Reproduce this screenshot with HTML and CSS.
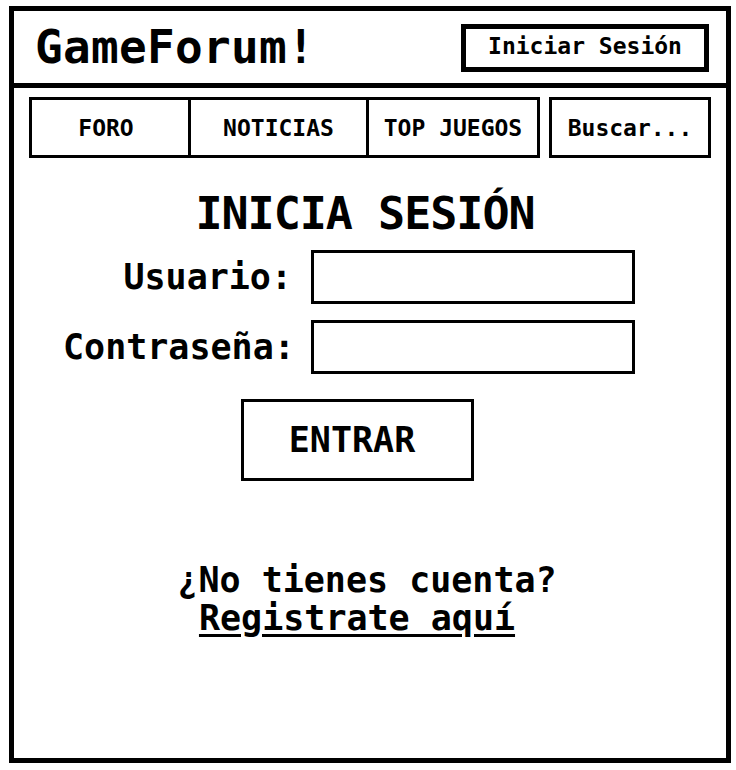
FILE: index.html
```html
<!DOCTYPE html>
<html lang="es">
<head>
  <meta charset="UTF-8" />
  <meta name="viewport" content="width=device-width, initial-scale=1.0"/>
  <title>GameForum! - Inicia sesión</title>
  <link rel="stylesheet" href="styles.css">
</head>
<body>
  <div class="frame">
    <div class="header">
      <span class="logo">GameForum!</span>
      <button class="btn-login">Iniciar Sesión</button>
    </div>

    <div class="nav">
      <div class="nav-group">
        <a class="nav-item foro" href="#">FORO</a>
        <a class="nav-item noticias" href="#">NOTICIAS</a>
        <a class="nav-item top" href="#">TOP JUEGOS</a>
      </div>
      <div class="nav-search">Buscar...</div>
    </div>

    <div class="login">
      <h1>INICIA SESIÓN</h1>
      <form class="login-form">
        <label for="usuario">Usuario:</label>
        <input id="usuario" type="text" />
        <label for="clave">Contraseña:</label>
        <input id="clave" type="password" />
      </form>
      <button class="btn-entrar">ENTRAR</button>

      <div class="register">
        <p>¿No tienes cuenta?</p>
        <a href="#">Registrate aquí</a>
      </div>
    </div>
  </div>
</body>
</html>
```

FILE: styles.css
```css
:root {
  --ink: #000000;
  --paper: #ffffff;
  --font-family: 'DejaVu Sans Mono', 'Liberation Mono', monospace;
}

body {
  margin: 0;
  padding: 0;
  font-family: var(--font-family);
  font-weight: bold;
  background-color: var(--paper);
  color: var(--ink);
}

.frame {
  box-sizing: border-box;
  width: 722px;
  height: 757px;
  margin: 6px 0 0 9px;
  border: 5px solid var(--ink);
}

.header {
  display: flex;
  align-items: center;
  justify-content: space-between;
  height: 72px;
  padding: 0 17px 0 21px;
  border-bottom: 5px solid var(--ink);
}

.logo {
  font-size: 46px;
  letter-spacing: 0.3px;
}

.btn-login {
  box-sizing: border-box;
  width: 248px;
  height: 48px;
  margin-top: 1px;
  padding: 0 0 4px;
  font-family: var(--font-family);
  font-weight: bold;
  font-size: 23px;
  color: var(--ink);
  background-color: var(--paper);
  border: 5px solid var(--ink);
  border-radius: 0;
}

.nav {
  display: flex;
  gap: 9px;
  margin: 9px 15px 0;
  height: 61px;
}

.nav-group {
  display: flex;
  border: 3px solid var(--ink);
}

.nav-item,
.nav-search {
  display: flex;
  align-items: center;
  justify-content: center;
  font-size: 23px;
  color: var(--ink);
  text-decoration: none;
}

.nav-item + .nav-item {
  border-left: 3px solid var(--ink);
}

.foro { width: 156px; padding-right: 8px; box-sizing: border-box; }
.noticias { width: 175px; }
.top { width: 168px; }

.nav-search {
  box-sizing: border-box;
  width: 162px;
  border: 3px solid var(--ink);
}

.login h1 {
  margin: 30px 0 0;
  padding-right: 10px;
  font-size: 45px;
  line-height: 52px;
  letter-spacing: -1px;
  text-align: center;
}

.login-form {
  display: grid;
  grid-template-columns: 229px 324px;
  column-gap: 19px;
  row-gap: 16px;
  align-items: center;
  margin: 10px 0 0;
  padding-left: 49px;
}

.login-form label {
  font-size: 35px;
  text-align: right;
}

.login-form input {
  box-sizing: border-box;
  height: 54px;
  border: 3px solid var(--ink);
  border-radius: 0;
  outline: none;
}

.btn-entrar {
  display: block;
  box-sizing: border-box;
  width: 233px;
  height: 82px;
  margin: 25px 0 0 227px;
  padding: 0 11px 0 0;
  font-family: var(--font-family);
  font-weight: bold;
  font-size: 35px;
  color: var(--ink);
  background-color: var(--paper);
  border: 3px solid var(--ink);
  border-radius: 0;
}

.register {
  margin-top: 80px;
  padding-right: 6px;
  text-align: center;
  font-size: 35px;
  line-height: 38px;
}

.register p {
  margin: 0;
}

.register a {
  display: inline-block;
  margin-right: 20px;
  color: var(--ink);
  text-decoration: underline;
  text-underline-offset: 4px;
}
```
